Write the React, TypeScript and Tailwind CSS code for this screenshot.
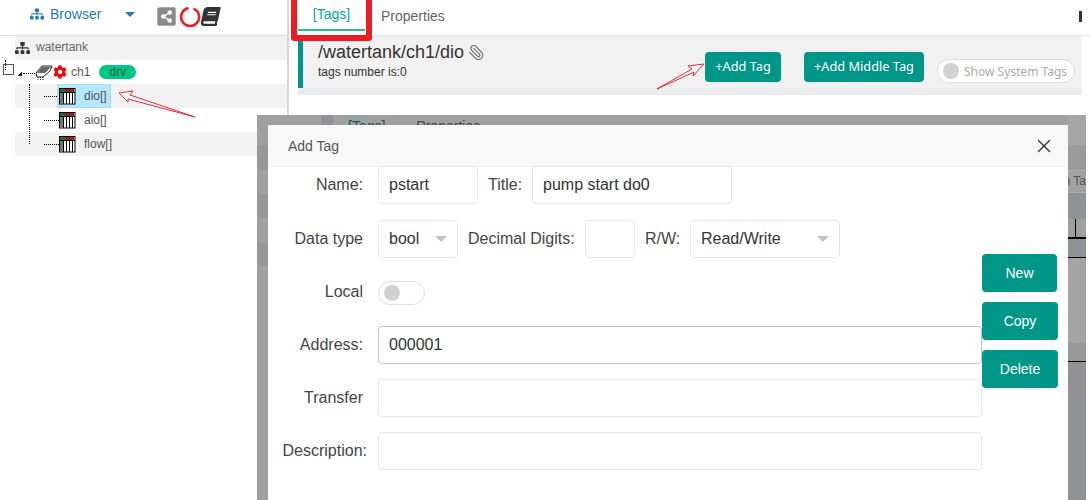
import React from "react";
import { FaSitemap, FaShareAltSquare, FaBook, FaCog } from "react-icons/fa";
import { X, Paperclip } from "lucide-react";

function Plc() {
  return (
    <svg width="17" height="17" viewBox="0 0 17 17" className="shrink-0">
      <rect x="0.5" y="0.5" width="15.5" height="15.5" fill="#fff" stroke="#000" />
      <rect x="1" y="4" width="3" height="12" fill="#777" />
      <rect x="1" y="1" width="5" height="3" fill="#0a7a2a" />
      <rect x="6" y="1" width="9" height="3" fill="#a01818" />
      <path d="M4.5 4V16M7.5 4V16M10.5 4V16M13.5 4V16" stroke="#000" strokeWidth="1" />
      <path d="M0 4.5H16" stroke="#000" strokeWidth="1" />
    </svg>
  );
}

function Device() {
  return (
    <svg width="18" height="16" viewBox="0 0 18 16">
      <path d="M1 9 L7 2 H17 L15 7 L8 13 H2 Z" fill="#fff" stroke="#222" />
      <path d="M2 9 H10 L16 3 L7 3 Z" fill="#666" />
      <path d="M3 13 V16 M5.5 13 V16 M8 13 V16" stroke="#222" strokeDasharray="1 1" />
    </svg>
  );
}

function Leaf({ label, shaded, selected }: { label: string; shaded?: boolean; selected?: boolean }) {
  return (
    <div className={`h-6 flex items-center pl-[29px] ${shaded ? "bg-[#f2f2f2]" : ""}`}>
      <span className="w-[15px] border-t border-dotted border-black" />
      <div
        className={`h-6 flex items-center ${
          selected ? "bg-[#b3e8ff] border border-[#a8dcf2] w-[54px] -ml-[2px] pl-[1px]" : ""
        }`}
      >
        <Plc />
        <span className="ml-2 text-xs text-[#555]">{label}</span>
      </div>
    </div>
  );
}

function Sidebar() {
  return (
    <aside className="w-[287px] shrink-0 relative">
      <div className="h-[36px] flex items-center pl-[30px] pb-[7px] border-b border-[#dddddd]">
        <FaSitemap className="text-[#1c7cb5] w-[14px] h-[14px]" />
        <span className="ml-[6px] text-sm text-[#1c7cb5]">Browser</span>
        <span className="ml-[24px] w-0 h-0 border-x-[5px] border-x-transparent border-t-[5px] border-t-[#1c7cb5]" />
        <FaShareAltSquare className="ml-[21px] mt-[5px] w-[21px] h-[21px] text-[#8a8a8a]" />
        <svg width="22" height="22" viewBox="0 0 22 22" className="ml-[2px] mt-[5px]">
          <path d="M14.5 2.6 A9 9 0 1 1 9.5 2.1" fill="none" stroke="#f01c24" strokeWidth="2.6" />
        </svg>
        <FaBook className="w-[19px] h-[19px] mt-[5px] text-[#333] -skew-x-12" />
      </div>
      <div className="pl-[15px] relative">
        <div className="h-6 bg-[#f2f2f2] flex items-center">
          <FaSitemap className="w-[15px] h-[14px] text-[#333]" />
          <span className="ml-[6px] text-xs text-[#666] -mt-[2px]">watertank</span>
        </div>
        <div className="h-6 flex items-center pl-[2px]">
          <span className="w-[5px] h-[5px] mr-[1px] bg-[linear-gradient(135deg,transparent_50%,#222_50%)] mt-[3px]" />
          <span className="w-[12px] border-t border-dotted border-black mt-[3px]" />
          <Device />
          <FaCog className="text-[#ee0a0a] w-[14px] h-[14px]" />
          <span className="ml-[4px] text-xs text-[#555]">ch1</span>
          <span className="ml-[9px] w-[37px] h-[14px] rounded-full bg-[#00c781] text-[#2b5a4c] text-xs leading-[14px] text-center">
            drv
          </span>
        </div>
        <Leaf label="dio[]" shaded selected />
        <Leaf label="aio[]" />
        <Leaf label="flow[]" shaded />
        <span className="absolute left-[29px] top-[48px] h-[60px] border-l border-dotted border-black" />
        <span className="absolute left-[5px] top-[24px] h-[10px] border-l border-dotted border-black" />
      </div>
      <span className="absolute left-[3px] top-[64px] w-[11px] h-[11px] border-[1.5px] border-[#555]" />
    </aside>
  );
}

function TopBtn({ children, w }: { children: React.ReactNode; w: string }) {
  return (
    <span
      className={`${w} h-[30px] bg-[#009688] rounded-sm text-white text-[12.75px] font-['Noto_Sans',sans-serif] flex items-center justify-center`}
    >
      {children}
    </span>
  );
}

function Main() {
  return (
    <main className="flex-1 border-l-[2px] border-[#d6d6d6] h-[116px] pl-[9px] pr-[9px] relative">
      <div className="h-[36px] border-b border-[#e6e6e6] flex items-center -ml-[9px] -mr-[9px] pl-[9px] relative">
        <div className="w-[67px] h-[31px] -mt-[5px] border-b-2 border-[#26bd8b] flex items-center justify-center text-sm text-[#00a99d]">
          [Tags]
        </div>
        <span className="ml-[16px] -mt-[4px] text-sm text-[#666]">Properties</span>
        <span className="absolute right-[9px] top-[11px] w-[3px] h-[11px] bg-[#333]" />
      </div>
      <div className="h-[59px] bg-[#f1f1f1] border-b-[7px] border-[#e9edf0] flex items-start">
        <div className="w-[5px] h-[52px] bg-[#009688] shrink-0" />
        <div className="ml-[15px] w-[387px] shrink-0 pt-[4px]">
          <div className="flex items-center text-lg leading-6 text-[#333]">
            /watertank/ch1/dio
            <Paperclip className="ml-[4px] w-[17px] h-[17px] text-[#666] -scale-x-100" strokeWidth={1.5} />
          </div>
          <div className="text-xs text-[#333] leading-4">tags number is:0</div>
        </div>
        <div className="mt-[16px]">
          <TopBtn w="w-[76px]">+Add Tag</TopBtn>
        </div>
        <div className="mt-[16px] ml-[23px]">
          <TopBtn w="w-[120px]">+Add Middle Tag</TopBtn>
        </div>
        <div className="ml-[13px] mt-[23px] w-[138px] h-[24px] rounded-full border border-[#dddddd] bg-white flex items-center pl-[5px]">
          <span className="w-[16px] h-[16px] rounded-full bg-[#d2d2d2]" />
          <span className="ml-[5px] mt-[2px] text-xs text-[#aaaaaa] font-['Noto_Sans',sans-serif]">Show System Tags</span>
        </div>
      </div>
    </main>
  );
}

function Stripe({ h, c, children }: { h: string; c: string; children?: React.ReactNode }) {
  return <div className={`${h} ${c} relative overflow-hidden shrink-0`}>{children}</div>;
}

function Field({ className, value }: { className: string; value?: string }) {
  return (
    <div
      className={`h-[38px] border rounded-sm bg-white pl-[10px] flex items-center text-base text-[#333] ${className}`}
    >
      {value}
    </div>
  );
}

function Select({ w, value }: { w: string; value: string }) {
  return (
    <div
      className={`${w} h-[38px] border border-[#e6e6e6] rounded-sm bg-white pl-[10px] pr-[10px] flex items-center justify-between text-base text-[#333]`}
    >
      {value}
      <span className="w-0 h-0 border-x-[6px] border-x-transparent border-t-[6px] border-t-[#c2c2c2]" />
    </div>
  );
}

function Label({ children, className = "pr-[4px]" }: { children: React.ReactNode; className?: string }) {
  return (
    <div className={`w-[99px] shrink-0 text-right text-base text-[#444] whitespace-nowrap ${className}`}>
      {children}
    </div>
  );
}

function Action({ children, w }: { children: React.ReactNode; w: string }) {
  return (
    <span className={`${w} h-[38px] bg-[#009688] rounded-sm text-white text-sm flex items-center justify-center`}>
      {children}
    </span>
  );
}

function Modal() {
  return (
    <div className="absolute left-[11px] top-[10px] w-[800px] h-[375px] bg-white">
      <div className="h-[42px] bg-[#f8f8f8] border-b border-[#eeeeee] flex items-center justify-between pl-[20px] pr-[13px]">
        <span className="text-sm text-[#555]">Add Tag</span>
        <X className="w-[22px] h-[22px] text-[#2f2f3a]" strokeWidth={1.5} />
      </div>
      <div className="flex">
        <div className="w-[714px] shrink-0">
          <div className="flex items-center -mt-px">
            <Label>Name:</Label>
            <Field className="w-[100px] ml-[11px] border-[#e6e6e6]" value="pstart" />
            <span className="ml-[10px] w-[44px] text-base text-[#444]">Title:</span>
            <Field className="w-[200px] border-[#e6e6e6]" value="pump start do0" />
          </div>
          <div className="flex items-center mt-[16px]">
            <Label>Data type</Label>
            <div className="ml-[11px]">
              <Select w="w-[80px]" value="bool" />
            </div>
            <span className="ml-[10px] w-[117px] text-base text-[#444]">Decimal Digits:</span>
            <Field className="w-[50px] border-[#e6e6e6]" />
            <span className="ml-[10px] w-[45px] text-base text-[#444]">R/W:</span>
            <Select w="w-[150px]" value="Read/Write" />
          </div>
          <div className="flex items-center mt-[23px] h-[24px]">
            <Label className="pr-[4px] -mt-[2px]">Local</Label>
            <div className="ml-[11px] w-[47px] h-[24px] rounded-full border border-[#dddddd] flex items-center pl-[5px]">
              <span className="w-[16px] h-[16px] rounded-full bg-[#d2d2d2]" />
            </div>
          </div>
          <div className="flex items-center mt-[21px]">
            <Label>Address:</Label>
            <Field className="flex-1 ml-[11px] border-[#c4c4c4]" value="000001" />
          </div>
          <div className="flex items-center mt-[15px]">
            <Label>Transfer</Label>
            <Field className="flex-1 ml-[11px] border-[#e6e6e6]" />
          </div>
          <div className="flex items-center mt-[15px]">
            <Label className="pr-0">Description:</Label>
            <Field className="flex-1 ml-[11px] border-[#e6e6e6]" />
          </div>
        </div>
        <div className="flex flex-col gap-[10px] mt-[87px]">
          <Action w="w-[75px]">New</Action>
          <Action w="w-[76px]">Copy</Action>
          <Action w="w-[76px]">Delete</Action>
        </div>
      </div>
    </div>
  );
}

function Backdrop() {
  return (
    <div className="absolute left-[257px] top-[115px] w-[829px] h-[385px] flex bg-[#a0a0a0]">
      <div className="w-[11px] shrink-0 flex flex-col">
        <Stripe h="h-[30px]" c="bg-[#a0a0a0]" />
        <Stripe h="h-[25px]" c="bg-[#979797]" />
        <Stripe h="h-[24px]" c="bg-[#a0a0a0]" />
        <Stripe h="h-[24px]" c="bg-[#979797]" />
        <Stripe h="h-[25px]" c="bg-[#a0a0a0]" />
        <Stripe h="h-[23px]" c="bg-[#979797]" />
        <Stripe h="h-[234px]" c="bg-[#a0a0a0]" />
      </div>
      <div className="w-[800px] shrink-0">
        <div className="h-[10px] overflow-hidden flex bg-[#a0a0a0] text-sm leading-4 pt-[3px]">
          <span className="ml-[53px] w-[12px] h-[10px] -mt-[3px] bg-[#8f9296]" />
          <span className="ml-[15px] text-[#0a5f5a]">[Tags]</span>
          <span className="ml-[31px] text-[#444]">Properties</span>
        </div>
      </div>
      <div className="w-[18px] shrink-0 flex flex-col">
        <Stripe h="h-[30px]" c="bg-[#a6a6a6]" />
        <Stripe h="h-[25px]" c="bg-[#9a9a9a]" />
        <Stripe h="h-[23px]" c="bg-[#a2a2a2] border-y border-[#b0b0b0] text-xs text-[#555] leading-[21px] whitespace-nowrap">
          <span className="absolute right-0">m Ta</span>
        </Stripe>
        <Stripe h="h-[26px]" c="bg-[#8f9296]" />
        <Stripe h="h-[20px]" c="bg-[#a0a0a0] border-b-2 border-black">
          <span className="absolute left-[7px] top-0 h-full border-l border-black" />
        </Stripe>
        <Stripe h="h-[19px]" c="bg-[#8f9296] border-b border-black" />
        <Stripe h="h-[85px]" c="bg-[#a4a4a4]" />
        <Stripe h="h-[19px]" c="bg-[#989898] border-b border-black" />
        <Stripe h="h-[138px]" c="bg-[#909295]" />
      </div>
      <Modal />
    </div>
  );
}

function Annotations() {
  return (
    <>
      <div className="absolute left-[291px] top-0 w-[81px] h-[41px] border-[6px] border-t-0 border-[#ed1c24] rounded-b-sm" />
      <svg className="absolute left-0 top-0 pointer-events-none" width="1091" height="500">
        <polygon points="119,93 133,91 130,95 195,117 128,99 128,102" fill="#fff" stroke="#f0242c" strokeWidth="1" />
        <polygon points="704,64 688,66 692,69 657,89 694,72 693,76" fill="#fff" stroke="#f0242c" strokeWidth="1" />
      </svg>
    </>
  );
}

export default function App() {
  return (
    <div className="relative w-[1091px] h-[500px] overflow-hidden bg-white font-['Liberation_Sans',Arial,sans-serif]">
      <div className="flex">
        <Sidebar />
        <Main />
      </div>
      <Backdrop />
      <Annotations />
    </div>
  );
}
